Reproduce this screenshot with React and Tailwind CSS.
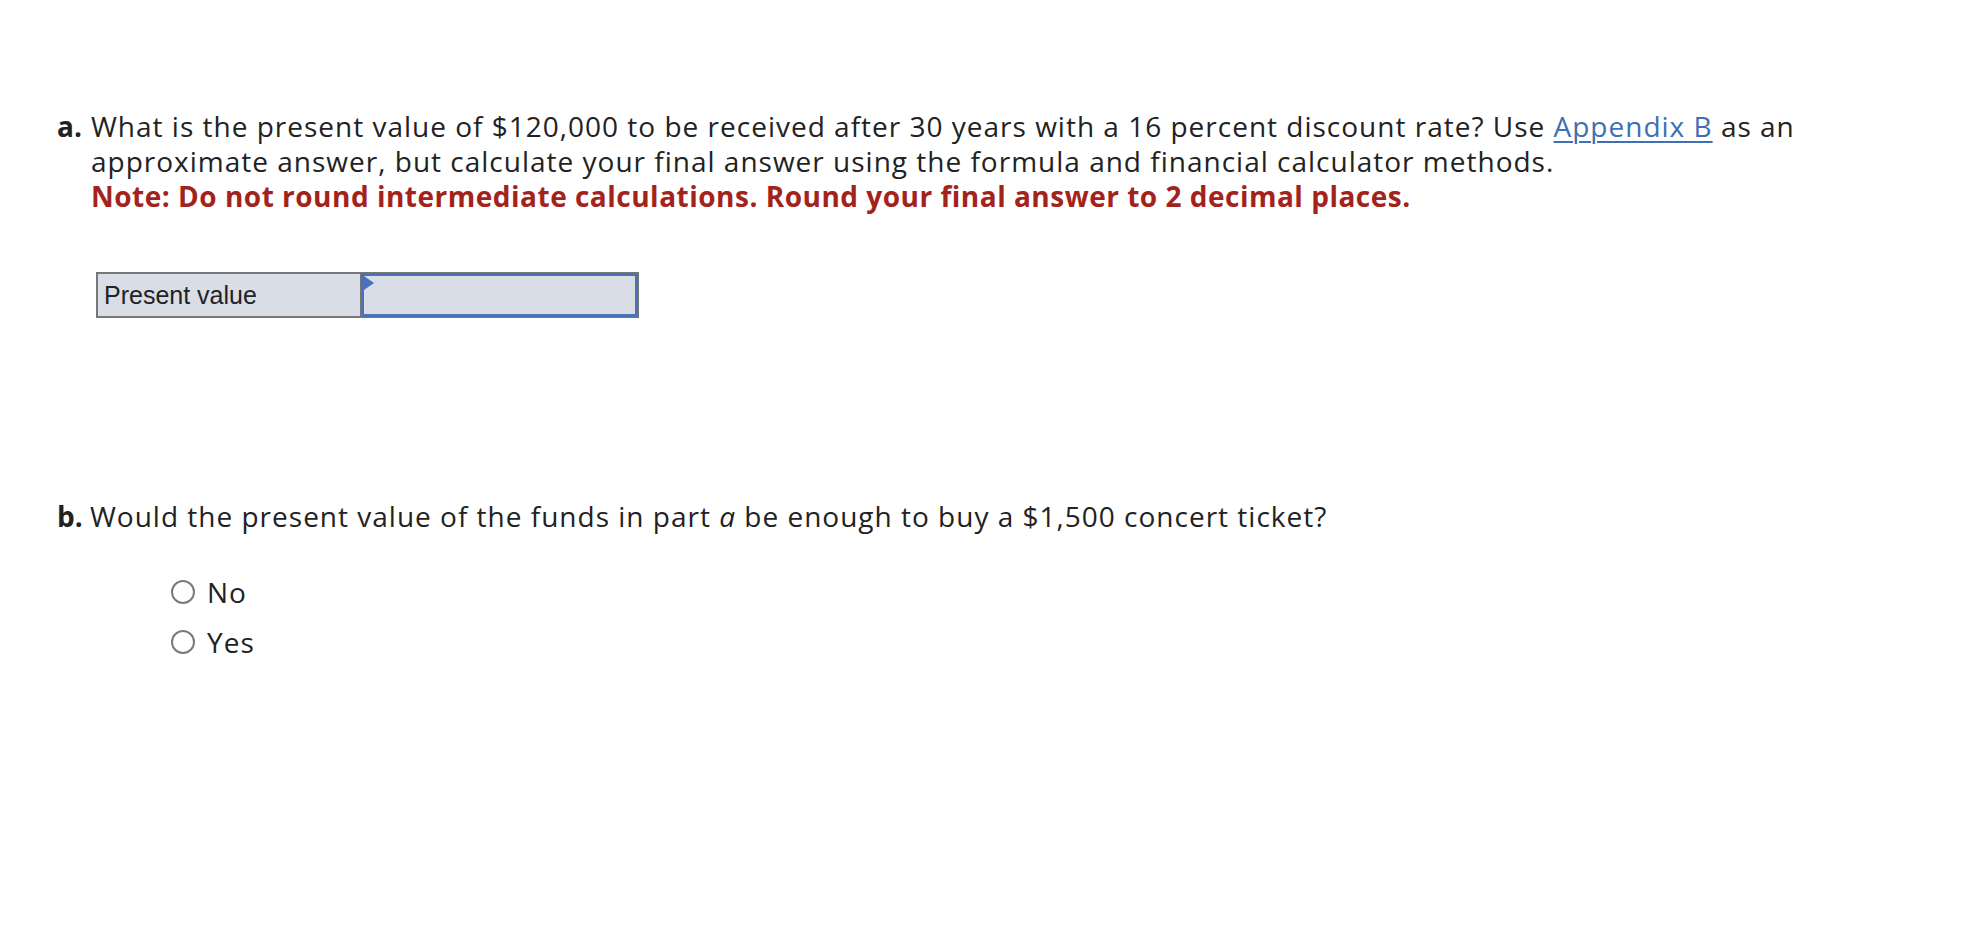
import React, { useState } from 'react';

const Radio = ({ label, checked, onSelect }) => (
  <label className="flex items-center h-[50px] cursor-pointer" onClick={onSelect}>
    <span className="w-[24px] h-[24px] rounded-full border-2 border-[#7a7a7a] bg-white flex items-center justify-center">
      {checked && <span className="w-[12px] h-[12px] rounded-full bg-[#4a72b8]" />}
    </span>
    <span className="ml-[12px]">{label}</span>
  </label>
);

const App = () => {
  const [answer, setAnswer] = useState(null);

  return (
    <div className="min-h-screen bg-white text-[#222] font-['Open_Sans',sans-serif] text-[28px] tracking-[1px] leading-[35px] pl-[57px] pt-[109px]">
      {/* Part a */}
      <div className="flex w-[1800px]">
        <span className="w-[34px] shrink-0 font-bold tracking-normal">a.</span>
        <div>
          <p>
            What is the present value of $120,000 to be received after 30 years with a 16 percent discount rate? Use{' '}
            <a href="#" className="text-[#3f6fb6] underline underline-offset-4 decoration-2">Appendix B</a> as an approximate answer, but calculate your final answer using the formula and financial calculator methods.
          </p>
          <p className="text-[#a3231c] font-bold tracking-[0.5px]">
            Note: Do not round intermediate calculations. Round your final answer to 2 decimal places.
          </p>
        </div>
      </div>

      {/* Answer table */}
      <div className="ml-[39px] mt-[58px] flex w-[543px] h-[46px] border-2 border-[#777] bg-[#d9dde6] font-['Liberation_Sans',Arial,sans-serif] text-[25px] tracking-normal leading-none">
        <div className="w-[264px] border-r-2 border-[#777] flex items-center pl-[6px]">Present value</div>
        <div className="relative flex-1 border-[3px] border-[#4a72b8] -m-[1px]">
          <span className="absolute left-0 top-0 w-0 h-0 border-t-[7px] border-b-[7px] border-l-[10px] border-t-transparent border-b-transparent border-l-[#4a72b8]" />
          <input className="w-full h-full bg-transparent outline-none px-2" />
        </div>
      </div>

      {/* Part b */}
      <div className="flex mt-[181px]">
        <span className="w-[33px] shrink-0 font-bold tracking-normal">b.</span>
        <p>
          Would the present value of the funds in part <i>a</i> be enough to buy a $1,500 concert ticket?
        </p>
      </div>

      <div className="ml-[114px] mt-[33px]">
        <Radio label="No" checked={answer === 'no'} onSelect={() => setAnswer('no')} />
        <Radio label="Yes" checked={answer === 'yes'} onSelect={() => setAnswer('yes')} />
      </div>
    </div>
  );
};

export default App;
